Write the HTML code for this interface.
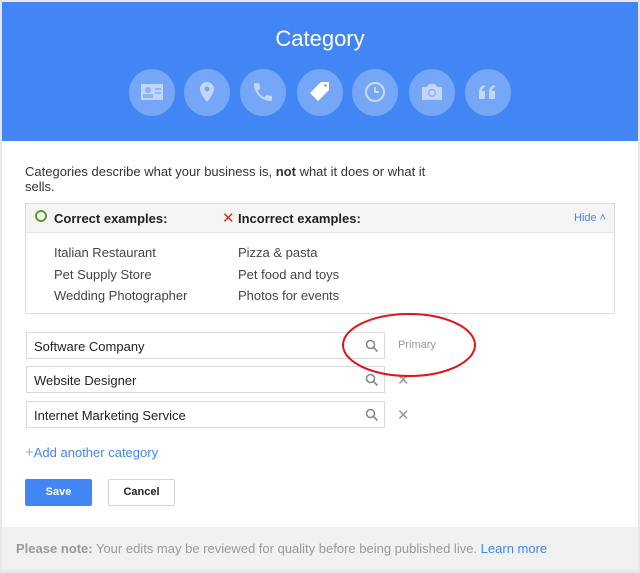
<!DOCTYPE html>
<html><head><style>
*{box-sizing:border-box;margin:0;padding:0}
body{width:640px;height:573px;background:#e8e8e8;font-family:"Liberation Sans",Arial,sans-serif;position:relative;overflow:hidden}
.card{position:absolute;left:2px;top:2px;width:636px;height:568px;background:#fff}
.hdr{position:absolute;left:0;top:0;width:636px;height:139px;background:#4285f4}
.title{position:absolute;top:24px;width:100%;text-align:center;color:#fff;font-size:22px}
.c{position:absolute;top:67px;width:46px;height:47px;border-radius:50%;background:rgba(255,255,255,.28)}
.c svg{position:absolute;left:11px;top:11px}
.abs{position:absolute}
.t{font-size:13px;color:#333}
.inp{position:absolute;left:24px;width:359px;height:27px;border:1px solid #d9d9d9;font-size:13px;color:#222;padding:6px 7px}
.mag{position:absolute;right:5px;top:6px}
.x{position:absolute;font-size:15px;color:#999}
</style></head><body>
<div class="card">
<div class="hdr">
<div class="title">Category</div>
<div class="c" style="left:127px"><svg width="24" height="24" viewBox="0 0 24 24" fill="rgba(255,255,255,.55)"><rect x="1" y="4" width="22" height="16"/><circle cx="8" cy="10" r="3" fill="#8fb3f7"/><rect x="3" y="14" width="10" height="4" fill="#8fb3f7"/><rect x="15" y="8" width="6" height="2" fill="#8fb3f7"/><rect x="15" y="12" width="6" height="2" fill="#8fb3f7"/></svg></div>
<div class="c" style="left:182px"><svg width="24" height="24" viewBox="0 0 24 24" fill="rgba(255,255,255,.55)"><path d="M12 2a7 7 0 0 0-7 7c0 5 7 13 7 13s7-8 7-13a7 7 0 0 0-7-7zm0 9.5a2.5 2.5 0 1 1 0-5 2.5 2.5 0 0 1 0 5z"/></svg></div>
<div class="c" style="left:238px"><svg width="24" height="24" viewBox="0 0 24 24" fill="rgba(255,255,255,.55)"><path d="M6.6 10.8c1.4 2.8 3.8 5.1 6.6 6.6l2.2-2.2c.3-.3.7-.4 1-.2 1.1.4 2.3.6 3.6.6.6 0 1 .4 1 1V20c0 .6-.4 1-1 1C10.6 21 3 13.4 3 4c0-.6.4-1 1-1h3.5c.6 0 1 .4 1 1 0 1.3.2 2.5.6 3.6.1.3 0 .7-.2 1z"/></svg></div>
<div class="c" style="left:295px"><svg width="24" height="24" viewBox="0 0 24 24" fill="#fff"><path d="M13 2h8v8L10 21 2 13z"/><circle cx="17.5" cy="5.5" r="1.5" fill="#8fb3f7"/></svg></div>
<div class="c" style="left:350px"><svg width="24" height="24" viewBox="0 0 24 24" fill="none" stroke="rgba(255,255,255,.6)" stroke-width="2"><circle cx="12" cy="12" r="9"/><path d="M12 7v5h4"/></svg></div>
<div class="c" style="left:407px"><svg width="24" height="24" viewBox="0 0 24 24" fill="rgba(255,255,255,.55)"><path d="M2 7h5l2-3h6l2 3h5v13H2z"/><circle cx="12" cy="13" r="4" fill="#8fb3f7"/><circle cx="12" cy="13" r="2.5"/></svg></div>
<div class="c" style="left:463px"><svg width="24" height="24" viewBox="0 0 24 24" fill="rgba(255,255,255,.55)"><path d="M3 19v-7c0-4 2-6 5-7l1 2c-2 1-3 2-3 4h3v8zM13 19v-7c0-4 2-6 5-7l1 2c-2 1-3 2-3 4h3v8z"/></svg></div>
</div>
<div class="abs t" style="left:23px;top:162px;line-height:15px;width:420px">Categories describe what your business is, <b>not</b> what it does or what it sells.</div>
<div class="abs" style="left:23px;top:201px;width:590px;height:111px;border:1px solid #ddd">
<div style="height:29px;background:#f5f5f5;border-bottom:1px solid #e5e5e5;position:relative;font-size:13px;font-weight:bold;color:#222">
<span class="abs" style="left:9px;top:6px;width:12px;height:12px;border:2px solid #5a9e2f;border-radius:50%"></span>
<span class="abs" style="left:28px;top:7px">Correct examples:</span>
<span class="abs" style="left:196px;top:5px;color:#c5391b;font-weight:normal;font-size:15px">✕</span>
<span class="abs" style="left:212px;top:7px">Incorrect examples:</span>
<span class="abs" style="left:548px;top:8px;font-size:11px;color:#4285f4;font-weight:normal">Hide ˄</span>
</div>
<div class="abs t" style="left:28px;top:38px;line-height:21.5px;color:#444">Italian Restaurant<br>Pet Supply Store<br>Wedding Photographer</div>
<div class="abs t" style="left:212px;top:38px;line-height:21.5px;color:#444">Pizza &amp; pasta<br>Pet food and toys<br>Photos for events</div>
</div>
<div class="inp" style="top:330px">Software Company<svg class="mag" width="14" height="14" viewBox="0 0 14 14" fill="none" stroke="#888" stroke-width="1.6"><circle cx="5.5" cy="5.5" r="4"/><path d="M8.5 8.5l4 4"/></svg></div>
<div class="abs" style="left:396px;top:337px;font-size:11px;color:#999">Primary</div>
<div class="inp" style="top:364px">Website Designer<svg class="mag" width="14" height="14" viewBox="0 0 14 14" fill="none" stroke="#888" stroke-width="1.6"><circle cx="5.5" cy="5.5" r="4"/><path d="M8.5 8.5l4 4"/></svg></div>
<div class="x" style="left:395px;top:369px">✕</div>
<div class="inp" style="top:399px">Internet Marketing Service<svg class="mag" width="14" height="14" viewBox="0 0 14 14" fill="none" stroke="#888" stroke-width="1.6"><circle cx="5.5" cy="5.5" r="4"/><path d="M8.5 8.5l4 4"/></svg></div>
<div class="x" style="left:395px;top:404px">✕</div>
<div class="abs" style="left:23px;top:442px;font-size:13px;color:#4285f4"><span style="color:#aaa;font-size:15px">+</span>Add another category</div>
<div class="abs" style="left:23px;top:477px;width:67px;height:27px;background:#4285f4;border-radius:2px;color:#fff;font-size:11px;font-weight:bold;text-align:center;line-height:27px">Save</div>
<div class="abs" style="left:106px;top:477px;width:67px;height:27px;border:1px solid #d6d6d6;border-radius:2px;color:#222;font-size:11px;font-weight:bold;text-align:center;line-height:25px">Cancel</div>
<div class="abs" style="left:0;top:525px;width:636px;height:43px;background:#f1f1f1;font-size:13px;color:#999;padding:14px 14px">
<b>Please note:</b> Your edits may be reviewed for quality before being published live. <span style="color:#4285f4">Learn more</span></div>
</div>
<svg class="abs" style="left:0;top:0" width="640" height="573"><ellipse cx="409" cy="345" rx="66" ry="31" fill="none" stroke="#e0141b" stroke-width="2"/></svg>
</body></html>
